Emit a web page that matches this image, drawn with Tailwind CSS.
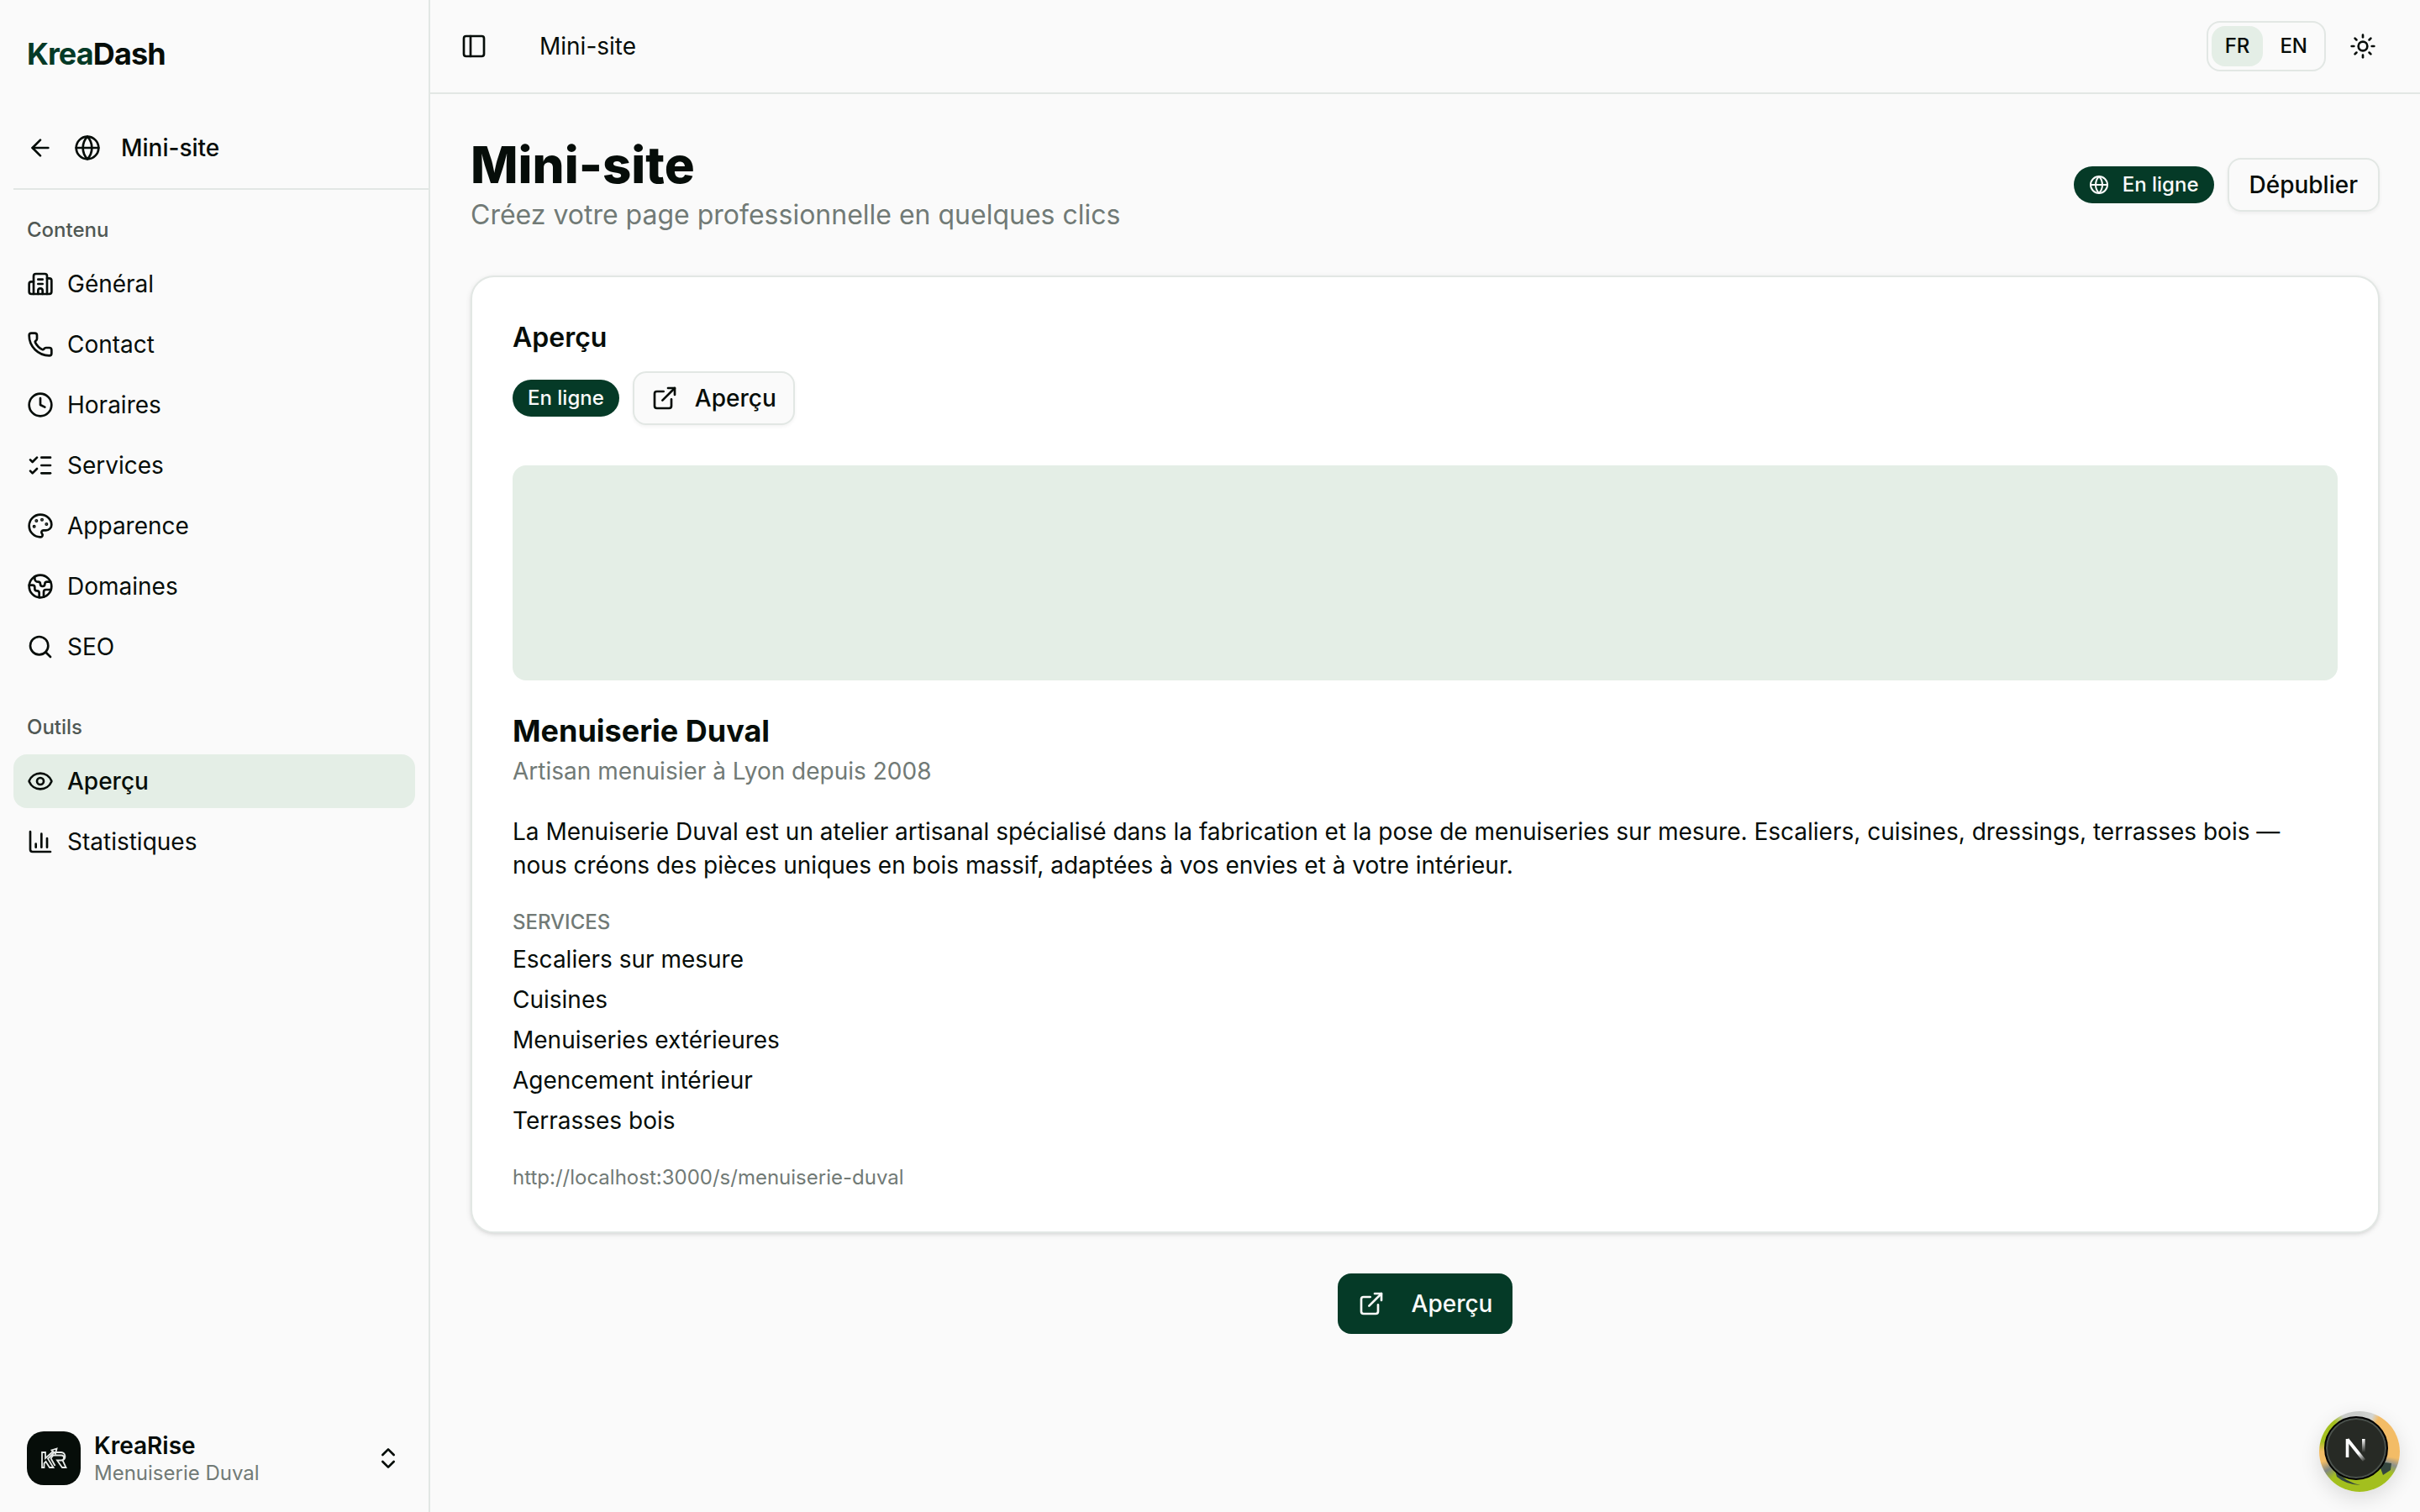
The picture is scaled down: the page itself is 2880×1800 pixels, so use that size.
<!DOCTYPE html>
<html lang="fr">
<head>
    <meta charset="UTF-8">
    <meta name="viewport" content="width=device-width, initial-scale=1.0">
    <title>KreaDash - Mini-site</title>
    <script src="https://cdn.jsdelivr.net/npm/@tailwindcss/browser@4"></script>
</head>
<body class="flex min-h-screen bg-[#fafafa] font-['Inter',sans-serif] text-[28px] leading-[40px] text-[#060d09]">

    <!-- Icônes partagées -->
    <svg class="hidden">
        <symbol id="globe" viewBox="0 0 24 24"><circle cx="12" cy="12" r="10"/><path d="M12 2a14.5 14.5 0 0 0 0 20 14.5 14.5 0 0 0 0-20"/><path d="M2 12h20"/></symbol>
        <symbol id="external" viewBox="0 0 24 24"><path d="M15 3h6v6"/><path d="M10 14 21 3"/><path d="M18 13v6a2 2 0 0 1-2 2H5a2 2 0 0 1-2-2V8a2 2 0 0 1 2-2h6"/></symbol>
    </svg>

    <!-- Barre latérale -->
    <aside class="flex w-[512px] shrink-0 flex-col border-r-2 border-[#e2e7e4]">
        <a href="#" class="flex h-32 items-center px-8 text-[36px] font-bold tracking-tight"><span class="text-[#053a27]">Krea</span>Dash</a>

        <div class="ml-4 flex h-[98px] items-center border-b-2 border-[#e2e7e4] pl-4">
            <button type="button" aria-label="Retour" class="mr-6">
                <svg class="size-8 fill-none stroke-current stroke-2 [stroke-linecap:round] [stroke-linejoin:round]" viewBox="0 0 24 24"><path d="m12 19-7-7 7-7"/><path d="M19 12H5"/></svg>
            </button>
            <svg class="mr-6 size-8 fill-none stroke-current stroke-2 [stroke-linecap:round] [stroke-linejoin:round]"><use href="#globe"/></svg>
            <span class="font-medium">Mini-site</span>
        </div>

        <nav class="flex flex-col fill-none [stroke-linecap:round] [stroke-linejoin:round]">
            <section class="p-4">
                <h2 class="flex h-16 items-center px-4 text-2xl font-medium text-[#505854]">Contenu</h2>
                <ul class="flex flex-col gap-2">
                    <li><a href="#" class="flex h-16 items-center gap-4 rounded-2xl px-4">
                        <svg class="size-8 stroke-current stroke-2" viewBox="0 0 24 24"><path d="M10 12h4"/><path d="M10 8h4"/><path d="M14 21v-3a2 2 0 0 0-4 0v3"/><path d="M6 10H4a2 2 0 0 0-2 2v7a2 2 0 0 0 2 2h16a2 2 0 0 0 2-2V9a2 2 0 0 0-2-2h-2"/><path d="M6 21V5a2 2 0 0 1 2-2h8a2 2 0 0 1 2 2v16"/></svg>
                        Général</a></li>
                    <li><a href="#" class="flex h-16 items-center gap-4 rounded-2xl px-4">
                        <svg class="size-8 stroke-current stroke-2" viewBox="0 0 24 24"><path d="M13.832 16.568a1 1 0 0 0 1.213-.303l.355-.465A2 2 0 0 1 17 15h3a2 2 0 0 1 2 2v3a2 2 0 0 1-2 2A18 18 0 0 1 2 4a2 2 0 0 1 2-2h3a2 2 0 0 1 2 2v3a2 2 0 0 1-.8 1.6l-.468.351a1 1 0 0 0-.292 1.233 14 14 0 0 0 6.392 6.384"/></svg>
                        Contact</a></li>
                    <li><a href="#" class="flex h-16 items-center gap-4 rounded-2xl px-4">
                        <svg class="size-8 stroke-current stroke-2" viewBox="0 0 24 24"><circle cx="12" cy="12" r="10"/><path d="M12 6v6l4 2"/></svg>
                        Horaires</a></li>
                    <li><a href="#" class="flex h-16 items-center gap-4 rounded-2xl px-4">
                        <svg class="size-8 stroke-current stroke-2" viewBox="0 0 24 24"><path d="M13 5h8"/><path d="M13 12h8"/><path d="M13 19h8"/><path d="m3 17 2 2 4-4"/><path d="m3 7 2 2 4-4"/></svg>
                        Services</a></li>
                    <li><a href="#" class="flex h-16 items-center gap-4 rounded-2xl px-4">
                        <svg class="size-8 stroke-current stroke-2" viewBox="0 0 24 24"><path d="M12 22a1 1 0 0 1 0-20 10 9 0 0 1 10 9 5 5 0 0 1-5 5h-2.25a1.75 1.75 0 0 0-1.4 2.8l.3.4a1.75 1.75 0 0 1-1.4 2.8z"/><circle cx="13.5" cy="6.5" r=".5" fill="currentColor"/><circle cx="17.5" cy="10.5" r=".5" fill="currentColor"/><circle cx="6.5" cy="12.5" r=".5" fill="currentColor"/><circle cx="8.5" cy="7.5" r=".5" fill="currentColor"/></svg>
                        Apparence</a></li>
                    <li><a href="#" class="flex h-16 items-center gap-4 rounded-2xl px-4">
                        <svg class="size-8 stroke-current stroke-2" viewBox="0 0 24 24"><path d="M21.54 15H17a2 2 0 0 0-2 2v4.54"/><path d="M7 3.34V5a3 3 0 0 0 3 3a2 2 0 0 1 2 2c0 1.1.9 2 2 2a2 2 0 0 0 2-2c0-1.1.9-2 2-2h3.17"/><path d="M11 21.95V18a2 2 0 0 0-2-2a2 2 0 0 1-2-2v-1a2 2 0 0 0-2-2H2.05"/><circle cx="12" cy="12" r="10"/></svg>
                        Domaines</a></li>
                    <li><a href="#" class="flex h-16 items-center gap-4 rounded-2xl px-4">
                        <svg class="size-8 stroke-current stroke-2" viewBox="0 0 24 24"><path d="m21 21-4.34-4.34"/><circle cx="11" cy="11" r="8"/></svg>
                        SEO</a></li>
                </ul>
            </section>
            <section class="p-4">
                <h2 class="flex h-16 items-center px-4 text-2xl font-medium text-[#505854]">Outils</h2>
                <ul class="flex flex-col gap-2">
                    <li><a href="#" class="flex h-16 items-center gap-4 rounded-2xl bg-[#e4eee6] px-4 font-medium" aria-current="page">
                        <svg class="size-8 stroke-current stroke-2" viewBox="0 0 24 24"><path d="M2.062 12.348a1 1 0 0 1 0-.696 10.75 10.75 0 0 1 19.876 0 1 1 0 0 1 0 .696 10.75 10.75 0 0 1-19.876 0"/><circle cx="12" cy="12" r="3"/></svg>
                        Aperçu</a></li>
                    <li><a href="#" class="flex h-16 items-center gap-4 rounded-2xl px-4">
                        <svg class="size-8 stroke-current stroke-2" viewBox="0 0 24 24"><path d="M3 3v16a2 2 0 0 0 2 2h16"/><path d="M18 17V9"/><path d="M13 17V5"/><path d="M8 17v-3"/></svg>
                        Statistiques</a></li>
                </ul>
            </section>
        </nav>

        <!-- Compte -->
        <div class="mt-auto p-4">
            <button type="button" class="flex h-24 w-full items-center gap-4 rounded-2xl px-4 text-left">
                <span class="flex size-16 shrink-0 items-center justify-center rounded-[20px] bg-[#060d09]">
                    <svg class="h-7 w-8 fill-none stroke-[#e6e9e7]" viewBox="0 0 32 28"><path stroke-width="1.8" d="M2 7h4v7l9-8-1.500-1.500 6-2-1.500 6-1.500-1.500-7.500 7.500 6.500 10.500h-4.500l-4.500-7-2 2v5H2zM17 7h8a5 5 0 0 1 1.500 9.500l4 8.500h-4.500l-6-8.500h5a2.500 2.500 0 0 0 0-6h-9.500l-3 3.500 5 9"/></svg>
                </span>
                <span class="flex flex-1 flex-col">
                    <span class="leading-[35px] font-semibold">KreaRise</span>
                    <span class="text-2xl leading-[30px] text-[#717a76]">Menuiserie Duval</span>
                </span>
                <svg class="size-8 fill-none stroke-current stroke-2 [stroke-linecap:round] [stroke-linejoin:round]" viewBox="0 0 24 24"><path d="m7 15 5 5 5-5"/><path d="m7 9 5-5 5 5"/></svg>
            </button>
        </div>
    </aside>

    <div class="flex min-w-0 flex-1 flex-col">
        <header class="flex h-28 items-center border-b-2 border-[#e2e7e4] pr-8 pl-6">
            <button type="button" aria-label="Menu" class="flex size-14 items-center justify-center">
                <svg class="size-8 fill-none stroke-current stroke-2 [stroke-linecap:round] [stroke-linejoin:round]" viewBox="0 0 24 24"><rect width="18" height="18" x="3" y="3" rx="2"/><path d="M9 3v18"/></svg>
            </button>
            <span class="ml-[50px]">Mini-site</span>
            <div class="ml-auto flex items-center gap-1 rounded-2xl border-2 border-[#e2e7e4] p-1 text-2xl font-medium">
                <button type="button" class="h-12 rounded-2xl bg-[#e4eee6] px-4">FR</button>
                <button type="button" class="h-12 rounded-2xl px-4">EN</button>
            </div>
            <button type="button" aria-label="Thème" class="ml-2 flex size-18 items-center justify-center">
                <svg class="size-8 fill-none stroke-current stroke-2 [stroke-linecap:round] [stroke-linejoin:round]" viewBox="0 0 24 24"><circle cx="12" cy="12" r="4"/><path d="M12 2v2"/><path d="M12 20v2"/><path d="m4.930 4.930 1.410 1.410"/><path d="m17.660 17.660 1.410 1.410"/><path d="M2 12h2"/><path d="M20 12h2"/><path d="m6.340 17.660-1.410 1.410"/><path d="m19.070 4.930-1.410 1.410"/></svg>
            </button>
        </header>

        <main class="flex flex-col gap-12 p-12">
            <div class="flex items-center justify-between">
                <div>
                    <h1 class="text-[60px] leading-[72px] font-extrabold">Mini-site</h1>
                    <p class="text-[32px] leading-[48px] text-[#717a76]">Créez votre page professionnelle en quelques clics</p>
                </div>
                <div class="flex items-center gap-4">
                    <span class="flex h-11 items-center gap-4 rounded-full bg-[#053a27] px-[18px] text-2xl font-medium text-[#fafafa]">
                        <svg class="size-6 fill-none stroke-current stroke-2 [stroke-linecap:round] [stroke-linejoin:round]"><use href="#globe"/></svg>
                        En ligne
                    </span>
                    <button type="button" class="h-16 rounded-2xl border-2 border-[#e2e7e4] px-6 font-medium shadow-[0_2px_4px_0_rgb(0_0_0/0.05)]">Dépublier</button>
                </div>
            </div>

            <!-- Aperçu du mini-site -->
            <section class="rounded-[28px] border-2 border-[#e2e7e4] bg-white p-12 shadow-[0_2px_6px_0_rgb(0_0_0/0.1),0_2px_4px_-2px_rgb(0_0_0/0.1)]">
                <h2 class="mb-4 text-[32px] leading-[48px] font-semibold">Aperçu</h2>
                <div class="mb-12 flex items-center gap-4">
                    <span class="flex h-11 items-center rounded-full bg-[#053a27] px-[18px] text-2xl font-medium text-[#fafafa]">En ligne</span>
                    <a href="#" class="flex h-16 items-center gap-5 rounded-2xl border-2 border-[#e2e7e4] bg-[#fafafa] px-5 font-medium shadow-[0_2px_4px_0_rgb(0_0_0/0.05)]">
                        <svg class="size-8 fill-none stroke-current stroke-2 [stroke-linecap:round] [stroke-linejoin:round]"><use href="#external"/></svg>
                        Aperçu
                    </a>
                </div>

                <div class="mb-8 h-64 rounded-2xl bg-[#e4eee6]"></div>

                <h3 class="text-[36px] leading-[56px] font-bold">Menuiserie Duval</h3>
                <p class="mb-8 text-[#717a76]">Artisan menuisier à Lyon depuis 2008</p>
                <p class="mb-8">La Menuiserie Duval est un atelier artisanal spécialisé dans la fabrication et la pose de menuiseries sur mesure. Escaliers, cuisines, dressings, terrasses bois — nous créons des pièces uniques en bois massif, adaptées à vos envies et à votre intérieur.</p>

                <h4 class="mb-2 text-2xl font-medium text-[#717a76] uppercase">Services</h4>
                <ul class="mb-8 flex flex-col gap-2">
                    <li>Escaliers sur mesure</li>
                    <li>Cuisines</li>
                    <li>Menuiseries extérieures</li>
                    <li>Agencement intérieur</li>
                    <li>Terrasses bois</li>
                </ul>
                <p class="text-2xl text-[#717a76]">http://localhost:3000/s/menuiserie-duval</p>
            </section>

            <a href="#" class="flex h-18 items-center gap-8 self-center rounded-2xl bg-[#053a27] px-6 font-medium text-[#fafafa]">
                <svg class="size-8 fill-none stroke-current stroke-2 [stroke-linecap:round] [stroke-linejoin:round]"><use href="#external"/></svg>
                Aperçu
            </a>
        </main>
    </div>

    <!-- Boutons flottants -->
    <div class="fixed right-6 bottom-6 size-24 rounded-full bg-[conic-gradient(#c9cbc9_0deg,#d3d5d2_20deg,#f3bc66_30deg,#f3bc66_100deg,#8d918c_112deg,#a3bf1e_125deg,#a3bf1e_225deg,#808681_240deg,#f3bc66_255deg,#f3bc66_270deg,#a3bf1e_285deg,#a3bf1e_320deg,#c9cbc9_335deg)] shadow-[0_8px_24px_rgb(0_0_0/0.12)]">
        <svg class="absolute inset-0 size-24" viewBox="0 0 96 96"><path fill="#34463f" d="M70 60l16 2-1 8-9 6zM19 71q14 14 30 17-18-1-28-10z"/></svg>
    </div>
    <button type="button" aria-label="Next.js" class="fixed right-[38px] bottom-[38px] flex size-[76px] items-center justify-center rounded-full border-2 border-black bg-[#272a25] shadow-[inset_0_0_0_2px_#4b524d]">
        <svg class="size-10 fill-none" viewBox="0 0 40 40">
            <defs>
                <linearGradient id="n-stem" x1="0" y1="0" x2="0" y2="1"><stop stop-color="#fff"/><stop offset="1" stop-color="#fff" stop-opacity="0"/></linearGradient>
                <linearGradient id="n-diag" gradientUnits="userSpaceOnUse" x1="23" y1="26" x2="30" y2="36"><stop stop-color="#fff"/><stop offset="1" stop-color="#fff" stop-opacity="0"/></linearGradient>
            </defs>
            <path stroke="#fff" stroke-width="3.600" d="M9.500 31V9"/>
            <path stroke="url(#n-diag)" stroke-width="4" d="M9.500 9.500l20 25"/>
            <path fill="url(#n-stem)" d="M27 9h3.600v16H27z"/>
        </svg>
    </button>
</body>
</html>
